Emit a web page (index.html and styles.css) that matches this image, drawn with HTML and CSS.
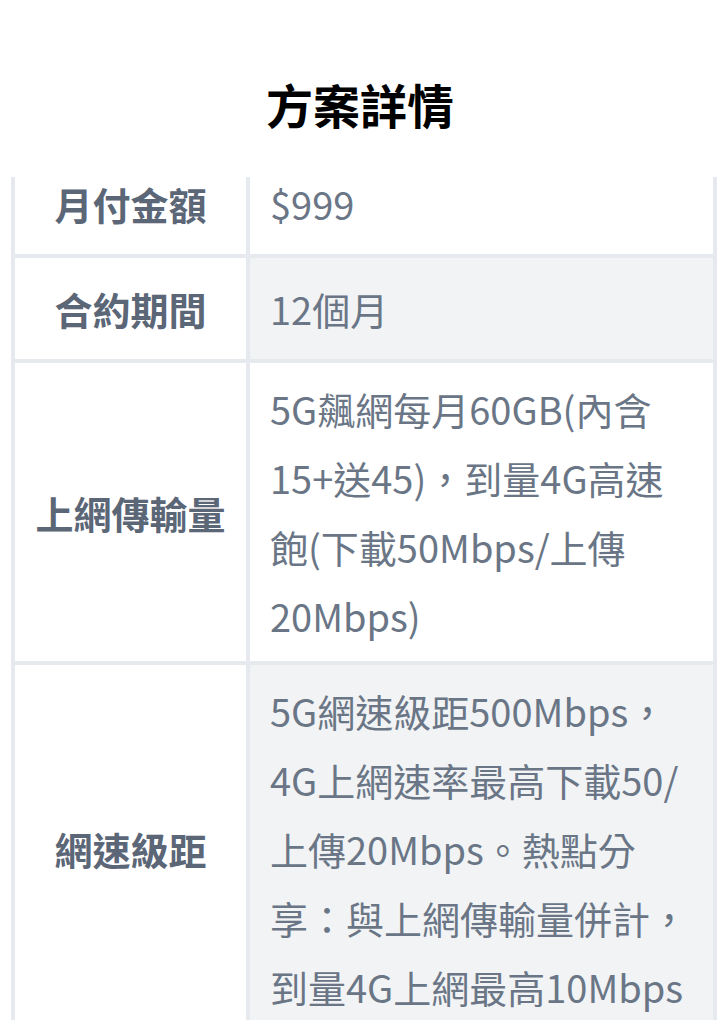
FILE: index.html
```html
<!DOCTYPE html>
<html lang="zh-Hant">
<head>
<meta charset="utf-8">
<title>方案詳情</title>
<link rel="stylesheet" href="styles.css">
</head>
<body>
<h2 class="title">方案詳情</h2>
<div class="scroller">
  <table class="plan">
    <tbody>
      <tr>
        <th>月付金額</th>
        <td>$999</td>
      </tr>
      <tr class="alt">
        <th>合約期間</th>
        <td>12個月</td>
      </tr>
      <tr>
        <th>上網傳輸量</th>
        <td>5G飆網每月60GB(內含15+送45)，到量4G高速飽(下載50Mbps/上傳20Mbps)</td>
      </tr>
      <tr class="alt">
        <th>網速級距</th>
        <td>5G網速級距500Mbps，4G上網速率最高下載50/上傳20Mbps。熱點分享：與上網傳輸量併計，到量4G上網最高10Mbps</td>
      </tr>
    </tbody>
  </table>
</div>
</body>
</html>
```

FILE: styles.css
```css
html, body {
  margin: 0;
  padding: 0;
  background: #ffffff;
}

body {
  font-family: "Noto Sans CJK TC", "Noto Sans", sans-serif;
}

.title {
  margin: 0;
  padding: 75px 0 44px;
  line-height: 58px;
  height: 58px;
  font-size: 47px;
  font-weight: 700;
  color: #000000;
  text-align: center;
}

.scroller {
  margin-left: 11px;
  width: 706px;
  height: 843px;
  overflow: hidden;
}

.plan {
  margin-top: -28px;
  width: 706px;
  border-collapse: separate;
  border-spacing: 4px;
  background: #e6e9ed;
  table-layout: fixed;
  font-size: 38px;
  line-height: 69px;
}

.plan th {
  width: 231px;
  padding: 16px 0;
  background: #ffffff;
  color: #5b6677;
  font-weight: 700;
  text-align: center;
  vertical-align: middle;
}

.plan td {
  padding: 11px 16px 11px 20px;
  background: #ffffff;
  color: #6a7686;
  font-weight: 400;
  text-align: left;
  vertical-align: middle;
}

.plan tr.alt td {
  background: #f1f3f5;
}
```
